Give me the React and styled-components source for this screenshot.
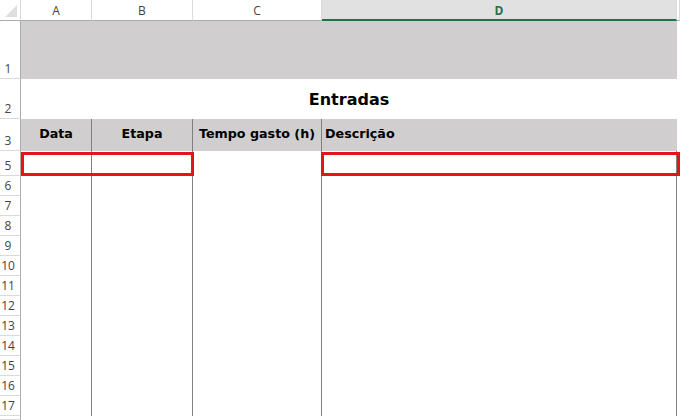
import React from "react";
import styled, { createGlobalStyle, css } from "styled-components";

const GlobalStyle = createGlobalStyle`
  html, body {
    margin: 0;
    padding: 0;
    background: #ffffff;
    overflow: hidden;
  }
  #root {
    width: 680px;
    height: 420px;
  }
`;

const UI_FONT = `"Open Sans", "Noto Sans", Arial, sans-serif`;
const CELL_FONT = `"DejaVu Sans", Verdana, sans-serif`;
const FILL = "#d0cece";
const RULE = "#808080";

const placed = css`
  grid-row: ${(p) => p.$row};
  grid-column: ${(p) => p.$col};
`;

const Sheet = styled.div`
  display: grid;
  grid-template-columns: 21px 71px 101px 129px 355px 3px;
  grid-template-rows: 21px 58px 40px 32px 25px repeat(12, 20px) 4px;
  width: 680px;
  height: 420px;
  overflow: hidden;
  background: #ffffff;
`;

const Corner = styled.div`
  ${placed};
  position: relative;
  box-sizing: border-box;
  border-right: 1px solid #dadada;
  border-bottom: 1px solid #ababab;
  background: #ffffff;

  &::after {
    content: "";
    position: absolute;
    right: 3px;
    bottom: 3px;
    width: 12px;
    height: 12px;
    background: #dfdfdf;
    clip-path: polygon(100% 0, 100% 100%, 0 100%);
  }
`;

const ColHead = styled.div`
  ${placed};
  box-sizing: border-box;
  display: flex;
  align-items: center;
  justify-content: center;
  padding-top: 1px;
  font-family: ${UI_FONT};
  font-size: 12px;
  color: #444444;
  background: #ffffff;
  border-right: 1px solid #dadada;
  border-bottom: 1px solid #ababab;

  ${(p) =>
    p.$active &&
    css`
      background: #e1e1e1;
      color: #217346;
      font-weight: 700;
      border-bottom: 2px solid #217346;
      padding-top: 2px;
    `}
`;

const RowHead = styled.div`
  ${placed};
  box-sizing: border-box;
  display: flex;
  align-items: flex-end;
  justify-content: center;
  padding: 0 4px 2px 0;
  font-family: ${UI_FONT};
  font-size: 12px;
  line-height: 15px;
  color: #444444;
  background: #ffffff;
  border-right: 1px solid #ababab;
  border-bottom: 1px solid #dadada;
`;

const Band = styled.div`
  ${placed};
  background: ${FILL};
`;

const Title = styled.div`
  ${placed};
  display: flex;
  align-items: center;
  justify-content: center;
  padding-top: 1px;
  font-family: ${CELL_FONT};
  font-weight: 700;
  font-size: 16px;
  color: #000000;
`;

const HeadCell = styled.div`
  ${placed};
  box-sizing: border-box;
  display: flex;
  align-items: center;
  justify-content: ${(p) => (p.$left ? "flex-start" : "center")};
  padding: 0 3px 3px;
  background: ${FILL};
  font-family: ${CELL_FONT};
  font-weight: 700;
  font-size: 12.7px;
  color: #000000;
  white-space: nowrap;
  border-right: 1px solid ${(p) => (p.$line ? RULE : FILL)};
`;

const Cell = styled.div`
  ${placed};
  box-sizing: border-box;
  background: #ffffff;
  border-right: 1px solid ${RULE};
`;

const Outline = styled.div`
  ${placed};
  z-index: 1;
  box-sizing: border-box;
  margin: 1px ${(p) => p.$right}px 0 ${(p) => p.$left}px;
  border: 3px solid #e3151b;
  pointer-events: none;
`;

const columns = ["A", "B", "C", "D"];
const headings = [
  { text: "Data" },
  { text: "Etapa" },
  { text: "Tempo gasto (h)" },
  { text: "Descrição", left: true },
];
// sheet row numbers shown from grid row 5 onward (row 4 is hidden)
const bodyRows = [5, 6, 7, 8, 9, 10, 11, 12, 13, 14, 15, 16, 17];

export default function App() {
  return (
    <>
      <GlobalStyle />
      <Sheet>
        <Corner $row={1} $col={1} />
        {columns.map((c, i) => (
          <ColHead key={c} $row={1} $col={i + 2} $active={c === "D"}>
            {c}
          </ColHead>
        ))}
        <ColHead $row={1} $col={6} />

        <RowHead $row={2} $col={1}>1</RowHead>
        <Band $row={2} $col="2 / 6" />

        <RowHead $row={3} $col={1}>2</RowHead>
        <Title $row={3} $col="2 / 6">Entradas</Title>

        <RowHead $row={4} $col={1}>3</RowHead>
        {headings.map((h, i) => (
          <HeadCell key={h.text} $row={4} $col={i + 2} $line={i < 3} $left={h.left}>
            {h.text}
          </HeadCell>
        ))}

        {bodyRows.map((n, r) => (
          <React.Fragment key={n}>
            <RowHead $row={r + 5} $col={1}>{n}</RowHead>
            {columns.map((c, i) => (
              <Cell key={c} $row={r + 5} $col={i + 2} />
            ))}
          </React.Fragment>
        ))}
        <RowHead $row={18} $col={1} />

        <Outline $row={5} $col="2 / 4" $left={0} $right={-1} />
        <Outline $row={5} $col="5 / 7" $left={-1} $right={0} />
      </Sheet>
    </>
  );
}
